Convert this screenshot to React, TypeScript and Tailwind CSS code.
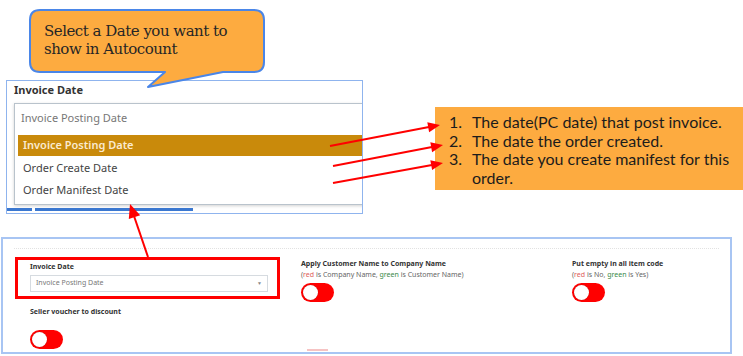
import React from "react";

const options = ["Order Create Date", "Order Manifest Date"];

const notes = [
  "The date(PC date) that post invoice.",
  "The date the order created.",
  "The date you create manifest for this order.",
];

function Toggle() {
  return (
    <div className="w-[33px] h-[19px] rounded-full bg-[#ff0000] flex items-center pl-[2px]">
      <div className="w-[15px] h-[15px] rounded-full bg-white shadow-[0_0_1px_rgba(0,0,0,0.4)]" />
    </div>
  );
}

function Hint({ no, yes }: { no: string; yes: string }) {
  return (
    <div className="text-[7px] leading-[10px] text-[#666]">
      (<span className="text-[#e0605a]">red</span> is {no}, <span className="text-[#3a8a4a]">green</span> is {yes})
    </div>
  );
}

export default function App() {
  return (
    <div className="relative w-[743px] h-[356px] overflow-hidden bg-white font-['Noto_Sans',sans-serif]">
      {/* Cropped dropdown, opened */}
      <div className="absolute left-[6px] top-[80px] w-[357px] h-[134px] border border-[#8fb4ee] overflow-hidden bg-white">
        <div className="pl-[7px] pt-[2px] text-[11px] leading-[14px] font-bold text-[#333]">Invoice Date</div>
        <div className="ml-[7px] mt-[6px] w-[400px] h-[102px] border border-[#b9c3cc] shadow-[0_1px_3px_rgba(0,0,0,0.18)] bg-white">
          <div className="h-[29px] flex items-center pl-[6px] text-[11px] text-[#777]">Invoice Posting Date</div>
          <div className="ml-[3px] mt-[2px] h-[21px] flex items-center pl-[5px] bg-[#c98a0b] text-[11px] font-semibold text-[#fbead0]">
            Invoice Posting Date
          </div>
          <div className="mt-[1px]">
            {options.map((o) => (
              <div key={o} className="h-[22px] flex items-center pl-[8px] text-[11px] text-[#444]">
                {o}
              </div>
            ))}
          </div>
        </div>
        <div className="mt-[3px] flex gap-[3px] -ml-[1px]">
          <div className="w-[26px] h-[3px] bg-[#3b78d0]" />
          <div className="w-[158px] h-[3px] bg-[#3b78d0]" />
        </div>
      </div>

      {/* Settings panel */}
      <div className="absolute left-[1px] top-[237px] w-[731px] h-[117px] border-2 border-[#a8c5f3] bg-white">
        <div className="mx-[11px] mt-[9px] border-t border-dotted border-[#e2e2e2]" />
        <div className="grid grid-cols-[271px_271px_1fr] pl-[27px] mt-[10px]">
          <div>
            <div className="pt-[3px] text-[7px] leading-[10px] font-bold text-[#333]">Invoice Date</div>
            <div className="mt-[3px] w-[238px] h-[17px] border border-[#d6dbe0] flex items-center justify-between pl-[5px] pr-[5px]">
              <span className="text-[7px] text-[#777]">Invoice Posting Date</span>
              <span className="text-[5px] text-[#888]">▼</span>
            </div>
            <div className="mt-[15px] text-[7px] leading-[10px] font-bold text-[#333]">Seller voucher to discount</div>
            <div className="mt-[13px]">
              <Toggle />
            </div>
          </div>
          <div>
            <div className="text-[7px] leading-[10px] font-bold text-[#333]">Apply Customer Name to Company Name</div>
            <div className="mt-[1px]">
              <Hint no="Company Name" yes="Customer Name" />
            </div>
            <div className="mt-[3px]">
              <Toggle />
            </div>
          </div>
          <div>
            <div className="text-[7px] leading-[10px] font-bold text-[#333]">Put empty in all item code</div>
            <div className="mt-[1px]">
              <Hint no="No" yes="Yes" />
            </div>
            <div className="mt-[3px]">
              <Toggle />
            </div>
          </div>
        </div>
      </div>

      {/* Explanation box */}
      <div className="absolute left-[435px] top-[107px] w-[310px] h-[83px] bg-[#fdab40] pt-[6px] pl-[14px] font-['Lato',sans-serif] text-[16px] leading-[18.5px] text-[#1c1c1c]">
        {notes.map((n, i) => (
          <div key={i} className="grid grid-cols-[23px_1fr] pr-[12px]">
            <span>{i + 1}.</span>
            <span>{n}</span>
          </div>
        ))}
      </div>

      {/* Callout bubble */}
      <svg className="absolute left-0 top-0" width="743" height="356" viewBox="0 0 743 356">
        <path
          d="M40 10 H254 Q264 10 264 20 V62 Q264 72 254 72 H223 L148 87 L165 72 H40 Q30 72 30 62 V20 Q30 10 40 10 Z"
          fill="#fdab40"
          stroke="#4a86e8"
          strokeWidth="2"
          strokeLinejoin="round"
        />
      </svg>
      <div className="absolute left-[44px] top-[22px] font-['DejaVu_Serif',serif] text-[15px] leading-[18px] tracking-[-0.5px] text-[#262626]">
        Select a Date you want to
        <br />
        show in Autocount
      </div>

      {/* Highlight around the field */}
      <div className="absolute left-[15px] top-[257px] w-[265px] h-[42px] border-[3px] border-[#ff0000]" />
      <div className="absolute left-[307px] top-[349px] w-[21px] h-[2px] bg-[#f6c3c3]" />

      {/* Arrows */}
      <svg className="absolute left-0 top-0 pointer-events-none" width="743" height="356" viewBox="0 0 743 356">
        <g stroke="#ff0000" strokeWidth="2" fill="none">
          <line x1="330" y1="146" x2="429" y2="127" />
          <line x1="333" y1="166" x2="432" y2="147" />
          <line x1="333" y1="183" x2="432" y2="165" />
          <line x1="148" y1="257" x2="134" y2="216" />
        </g>
        <g fill="#ff0000">
          <polygon points="440,125 429.1,132.2 427.3,122.3" />
          <polygon points="443,145 432.1,152.2 430.3,142.3" />
          <polygon points="443,163 432.1,170 430.3,160.2" />
          <polygon points="130,204 140.2,215.3 128.8,219.1" />
        </g>
      </svg>
    </div>
  );
}
